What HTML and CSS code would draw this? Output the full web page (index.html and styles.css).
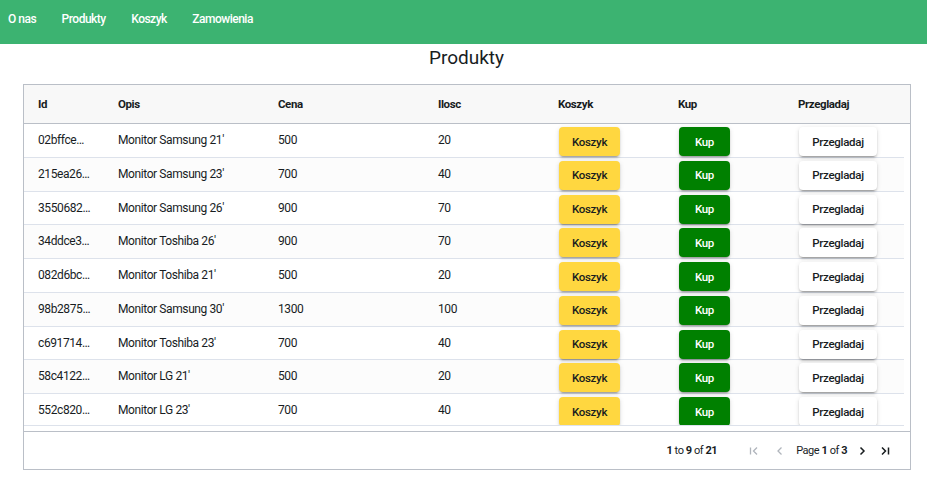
FILE: index.html
```html
<!DOCTYPE html>
<html lang="pl">
<head>
<meta charset="utf-8">
<title>Produkty</title>
<link rel="stylesheet" href="styles.css">
</head>
<body>
<nav class="navbar">
  <a class="nav-link" href="#">O nas</a>
  <a class="nav-link" href="#">Produkty</a>
  <a class="nav-link" href="#">Koszyk</a>
  <a class="nav-link" href="#">Zamowienia</a>
</nav>
<main class="content">
  <h1 class="title">Produkty</h1>
  <div class="grid">
    <div class="grid-header row-cols">
      <div class="hcell">Id</div>
      <div class="hcell">Opis</div>
      <div class="hcell">Cena</div>
      <div class="hcell">Ilosc</div>
      <div class="hcell">Koszyk</div>
      <div class="hcell">Kup</div>
      <div class="hcell">Przegladaj</div>
    </div>
    <div class="grid-body">
      <div class="row row-cols"><div class="cell id">02bffce…</div><div class="cell">Monitor Samsung 21'</div><div class="cell">500</div><div class="cell">20</div><div class="cell btn-cell"><button class="btn btn-cart">Koszyk</button></div><div class="cell btn-cell"><button class="btn btn-buy">Kup</button></div><div class="cell btn-cell"><button class="btn btn-view">Przegladaj</button></div></div>
      <div class="row row-cols odd"><div class="cell id">215ea26…</div><div class="cell">Monitor Samsung 23'</div><div class="cell">700</div><div class="cell">40</div><div class="cell btn-cell"><button class="btn btn-cart">Koszyk</button></div><div class="cell btn-cell"><button class="btn btn-buy">Kup</button></div><div class="cell btn-cell"><button class="btn btn-view">Przegladaj</button></div></div>
      <div class="row row-cols"><div class="cell id">3550682…</div><div class="cell">Monitor Samsung 26'</div><div class="cell">900</div><div class="cell">70</div><div class="cell btn-cell"><button class="btn btn-cart">Koszyk</button></div><div class="cell btn-cell"><button class="btn btn-buy">Kup</button></div><div class="cell btn-cell"><button class="btn btn-view">Przegladaj</button></div></div>
      <div class="row row-cols odd"><div class="cell id">34ddce3…</div><div class="cell">Monitor Toshiba 26'</div><div class="cell">900</div><div class="cell">70</div><div class="cell btn-cell"><button class="btn btn-cart">Koszyk</button></div><div class="cell btn-cell"><button class="btn btn-buy">Kup</button></div><div class="cell btn-cell"><button class="btn btn-view">Przegladaj</button></div></div>
      <div class="row row-cols"><div class="cell id">082d6bc…</div><div class="cell">Monitor Toshiba 21'</div><div class="cell">500</div><div class="cell">20</div><div class="cell btn-cell"><button class="btn btn-cart">Koszyk</button></div><div class="cell btn-cell"><button class="btn btn-buy">Kup</button></div><div class="cell btn-cell"><button class="btn btn-view">Przegladaj</button></div></div>
      <div class="row row-cols odd"><div class="cell id">98b2875…</div><div class="cell">Monitor Samsung 30'</div><div class="cell">1300</div><div class="cell">100</div><div class="cell btn-cell"><button class="btn btn-cart">Koszyk</button></div><div class="cell btn-cell"><button class="btn btn-buy">Kup</button></div><div class="cell btn-cell"><button class="btn btn-view">Przegladaj</button></div></div>
      <div class="row row-cols"><div class="cell id">c691714…</div><div class="cell">Monitor Toshiba 23'</div><div class="cell">700</div><div class="cell">40</div><div class="cell btn-cell"><button class="btn btn-cart">Koszyk</button></div><div class="cell btn-cell"><button class="btn btn-buy">Kup</button></div><div class="cell btn-cell"><button class="btn btn-view">Przegladaj</button></div></div>
      <div class="row row-cols odd"><div class="cell id">58c4122…</div><div class="cell">Monitor LG 21'</div><div class="cell">500</div><div class="cell">20</div><div class="cell btn-cell"><button class="btn btn-cart">Koszyk</button></div><div class="cell btn-cell"><button class="btn btn-buy">Kup</button></div><div class="cell btn-cell"><button class="btn btn-view">Przegladaj</button></div></div>
      <div class="row row-cols"><div class="cell id">552c820…</div><div class="cell">Monitor LG 23'</div><div class="cell">700</div><div class="cell">40</div><div class="cell btn-cell"><button class="btn btn-cart">Koszyk</button></div><div class="cell btn-cell"><button class="btn btn-buy">Kup</button></div><div class="cell btn-cell"><button class="btn btn-view">Przegladaj</button></div></div>
    </div>
    <div class="hscroll"></div>
    <div class="paging">
      <span class="summary"><b>1</b> to <b>9</b> of <b>21</b></span>
      <svg class="pg-icon disabled pg-first" width="10" height="10" viewBox="0 0 10 10"><path d="M1.5 1.5v7M8 1.5L4.5 5 8 8.5" fill="none" stroke="currentColor" stroke-width="1.3"/></svg>
      <svg class="pg-icon disabled pg-prev" width="10" height="10" viewBox="0 0 10 10"><path d="M6.5 1.5L3 5l3.5 3.5" fill="none" stroke="currentColor" stroke-width="1.3"/></svg>
      <span class="pg-text">Page <b>1</b> of <b>3</b></span>
      <svg class="pg-icon pg-next" width="10" height="10" viewBox="0 0 10 10"><path d="M3.5 1.5L7 5 3.5 8.5" fill="none" stroke="currentColor" stroke-width="1.5"/></svg>
      <svg class="pg-icon pg-last" width="10" height="10" viewBox="0 0 10 10"><path d="M2 1.5L5.5 5 2 8.5M8.5 1.5v7" fill="none" stroke="currentColor" stroke-width="1.5"/></svg>
    </div>
  </div>
</main>
</body>
</html>
```
FILE: styles.css
```css
* { box-sizing: border-box; }
html, body { margin: 0; padding: 0; }
body {
  font-family: Roboto, "Liberation Sans", sans-serif;
  color: #181d1f;
  background: #fff;
}
.navbar {
  height: 44px;
  background: #3cb371;
  display: flex;
  align-items: flex-start;
  padding: 12px 0 0 8px;
  gap: 25.5px;
}
.nav-link {
  color: #fff;
  text-decoration: none;
  font-size: 12px;
  font-weight: 500;
  letter-spacing: -0.5px;
  line-height: 15px;
}
.content {
  margin: 0 17px 0 23px;
}
.title {
  margin: 0;
  height: 40px;
  padding-top: 2px;
  text-align: center;
  font-size: 19px;
  font-weight: 400;
  line-height: 24px;
  color: #181d1f;
}
.grid {
  border: 1px solid #babfc7;
  width: 888px;
  font-size: 12px;
  letter-spacing: -0.4px;
}
.row-cols {
  display: grid;
  grid-template-columns: 80px 160px 160px 120px 120px 120px 120px;
  width: 880px;
}
.grid-header {
  width: 100%;
  grid-template-columns: 80px 160px 160px 120px 120px 120px 120px 6px;
  height: 39px;
  background: #f8f8f8;
  border-bottom: 1px solid #babfc7;
}
.hcell {
  padding-left: 14px;
  font-weight: 700;
  line-height: 38px;
  font-size: 11.5px;
}
.grid-body {
  height: 301px;
  overflow: hidden;
}
.row {
  height: 33.75px;
  border-bottom: 1px solid #dde2eb;
  background: #fff;
}
.row.odd { background: #fcfcfc; }
.cell {
  padding: 0 14px;
  line-height: 32.75px;
  white-space: nowrap;
  overflow: hidden;
  text-overflow: ellipsis;
}
.cell.id { padding-right: 4px; }
.btn-cell {
  padding: 3px 0 0 15px;
  overflow: visible;
}
.btn {
  height: 29px;
  border: none;
  border-radius: 4px;
  font-family: Roboto, "Liberation Sans", sans-serif;
  font-size: 11.5px;
  font-weight: 500;
  letter-spacing: -0.3px;
  padding: 0;
  box-shadow: 0 3px 1px -2px rgba(0,0,0,.2), 0 2px 2px 0 rgba(0,0,0,.14), 0 1px 5px 0 rgba(0,0,0,.12);
  display: block;
  cursor: pointer;
}
.btn-cart { background: #ffd740; color: #181d1f; width: 61px; }
.btn-buy { background: #008000; color: #fff; width: 51px; }
.btn-view { background: #fff; color: #181d1f; width: 78px; }
.hscroll {
  width: 880px;
  height: 6px;
  border-top: 1px solid #dde2eb;
}
.paging {
  height: 38px;
  border-top: 1px solid #babfc7;
  display: flex;
  align-items: center;
  justify-content: flex-end;
  padding-right: 20px;
  font-size: 11px;
  letter-spacing: -0.45px;
}
.paging b { font-weight: 700; }
.pg-icon { color: #181d1f; flex: none; }
.pg-icon.disabled { color: #b0b5bc; }
.pg-first { margin-left: 32px; }
.pg-prev { margin-left: 16px; }
.pg-text { margin: 0 10px 0 11px; }
.pg-last { margin-left: 13px; }
```
